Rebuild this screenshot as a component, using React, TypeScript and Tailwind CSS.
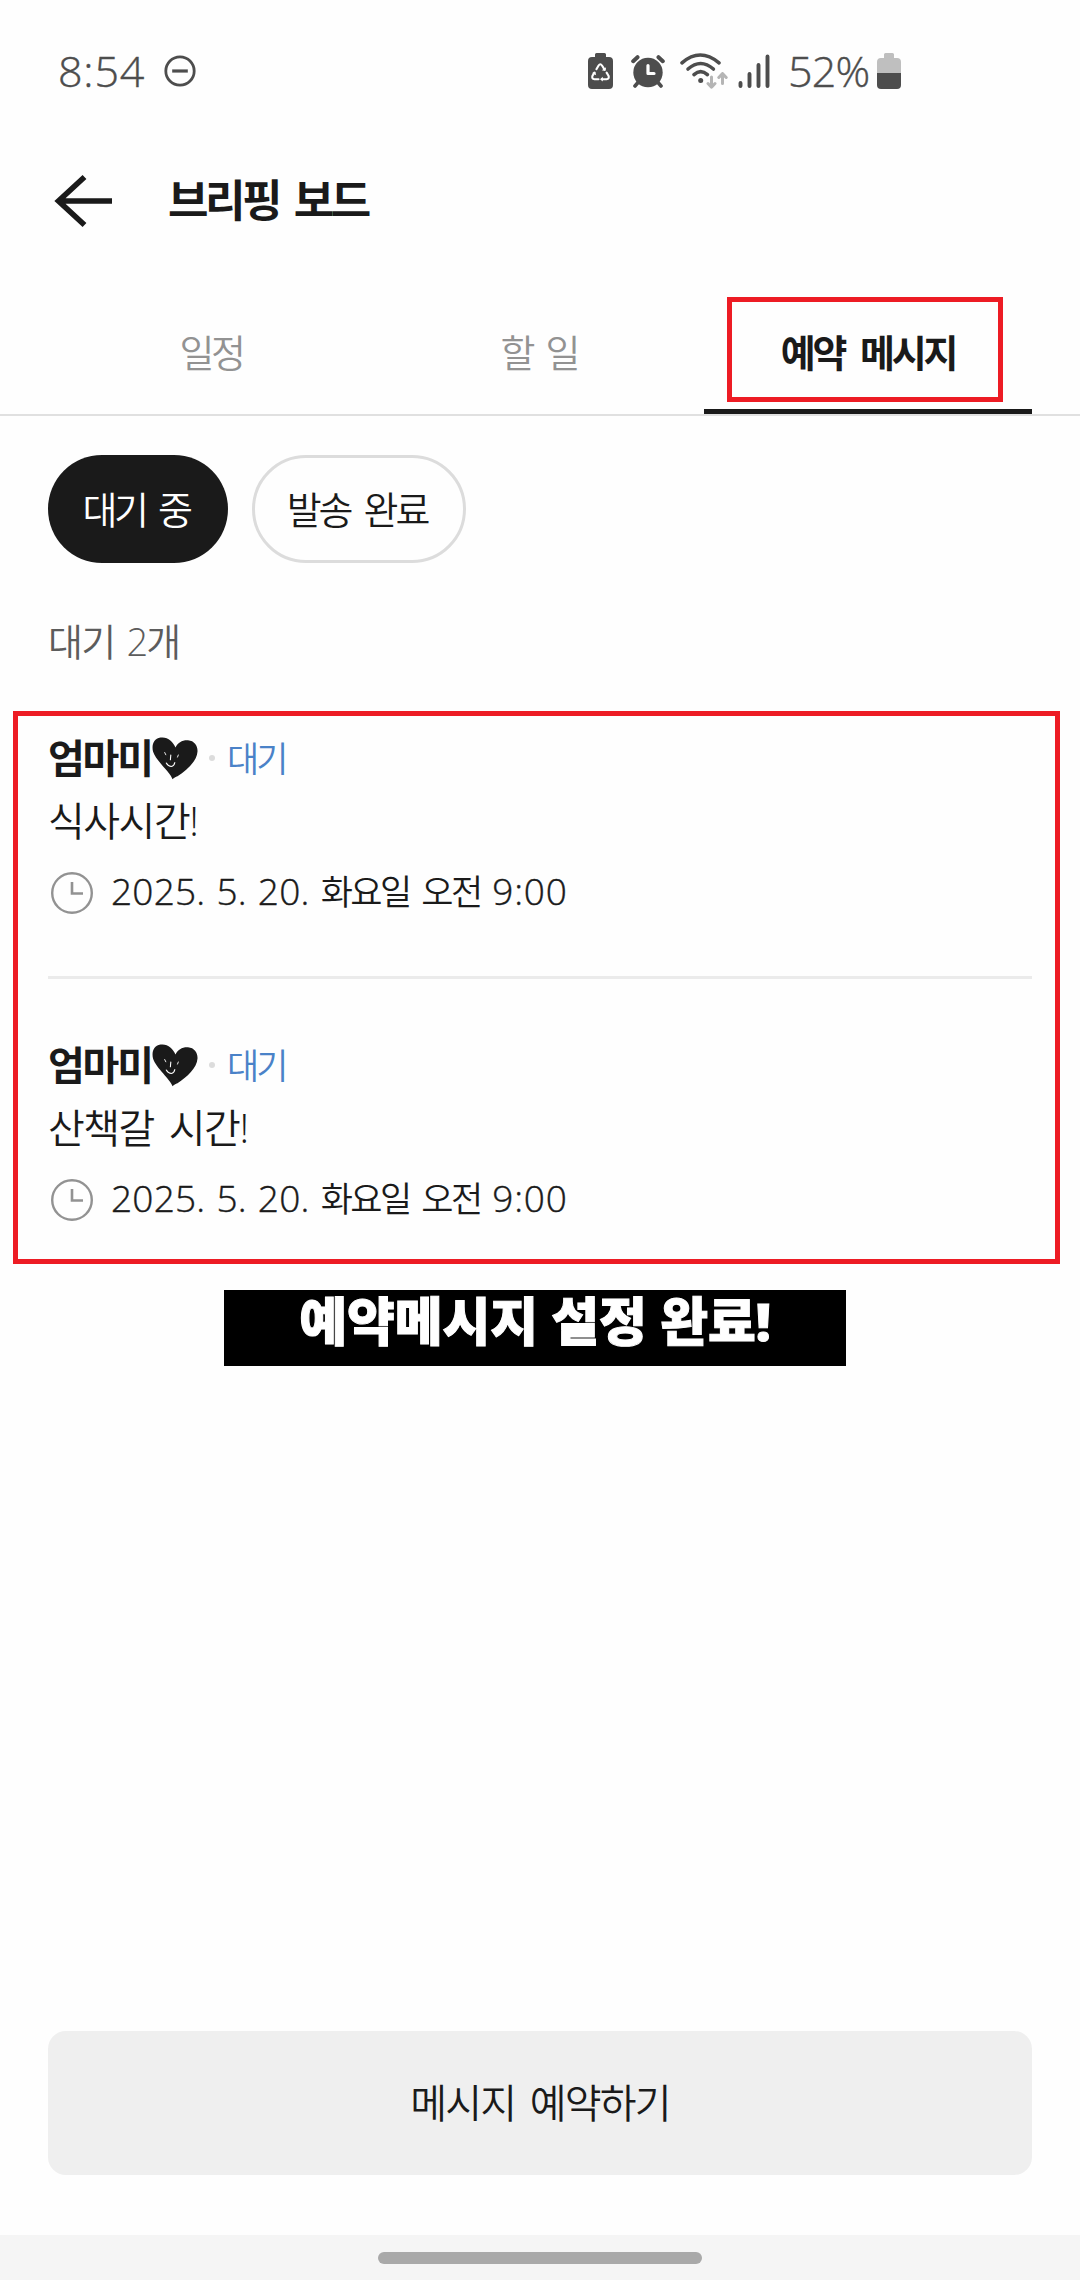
import React from "react";

function Dnd() {
  return (
    <svg className="size-8" viewBox="0 0 32 32" fill="none" stroke="#4d4d4d">
      <circle cx="16" cy="16" r="14.2" strokeWidth="2.8" />
      <path d="M8.2 16h15.6" strokeWidth="3.2" />
    </svg>
  );
}

function RecycleBattery() {
  return (
    <svg className="h-9 w-[25px]" viewBox="0 0 25 36">
      <path d="M7 1.500Q7 0 8.500 0h8Q18 0 18 1.500V4h3q4 0 4 4v24q0 4-4 4H4q-4 0-4-4V8q0-4 4-4h3z" fill="#4d4d4d" />
      <g fill="none" stroke="#fff" strokeWidth="2.100" strokeLinecap="round" strokeLinejoin="round">
        <path d="M8.400 16.200l2.200-3.700q1.700-2.400 3.400 0l2.500 4" />
        <path d="M18.600 19.600l1.900 3.100q1.100 3.200-2 3.500h-4.500" />
        <path d="M10.500 26.200h-4q-3.100-.3-2-3.500l1.900-3.100" />
      </g>
      <path d="M13.800 17.200l3.600.7.700-3.600zM14.800 23.800v4.800l-2.800-2.400zM4 20.100l3.300-1.400.9 3.500z" fill="#fff" />
    </svg>
  );
}

function Alarm() {
  return (
    <svg className="h-[34px] w-[34px]" viewBox="0 0 34 34" fill="none" strokeLinecap="round">
      <circle cx="17" cy="18.500" r="14.700" fill="#4d4d4d" />
      <path d="M2.200 7.200l4.300-4M31.800 7.200l-4.300-4" stroke="#4d4d4d" strokeWidth="4" />
      <path d="M7 28.500l-3 3.500M27 28.500l3 3.500" stroke="#4d4d4d" strokeWidth="3.600" />
      <path d="M17 11.500v8h6" stroke="#fff" strokeWidth="3.200" strokeLinejoin="round" />
    </svg>
  );
}

function Wifi() {
  return (
    <svg className="h-9 w-12" viewBox="0 0 48 36" fill="none" strokeLinecap="round">
      <g stroke="#4d4d4d" strokeWidth="3.600">
        <path d="M2 9.800q18-15.600 37 0" />
        <path d="M8 16q12.600-11 25.400 0" />
        <path d="M14 21.600q6.700-6 13.400 0" />
      </g>
      <circle cx="20.700" cy="27.600" r="2.500" fill="#4d4d4d" />
      <g stroke="#b5b5b5" strokeWidth="3" strokeLinejoin="round">
        <path d="M31.500 24v10M28 30.500l3.500 3.700 3.500-3.700" />
        <path d="M42.500 30.500v-10M38.800 24.500l3.700-3.900 3.700 3.900" />
      </g>
    </svg>
  );
}

function Signal() {
  return (
    <svg className="h-[34px] w-8" viewBox="0 0 32 34" stroke="#4d4d4d" strokeWidth="3.900" strokeLinecap="round">
      <path d="M2.500 29v3M11.500 20v12M20.500 11v21M29.500 2.500V32" />
    </svg>
  );
}

function Battery() {
  return (
    <svg className="h-9 w-6" viewBox="0 0 24 36">
      <path d="M7 1.500Q7 0 8.500 0h7Q17 0 17 1.500V5h3q4 0 4 4v11H0V9q0-4 4-4h3z" fill="#bfbfbf" />
      <path d="M0 20h24v12q0 4-4 4H4q-4 0-4-4z" fill="#4d4d4d" />
    </svg>
  );
}

function Heart() {
  return (
    <svg className="h-[43px] w-[46px]" viewBox="0 0 46 43" fill="none">
      <path
        d="M20.500 42.300C19 36 4 24 1 14.500-.5 8 1.500 2 8.500.6 15.500-.5 21 4.500 23.500 10.500 25.500 5.500 31 2.800 36 3.300c6.500.6 9.800 5.500 9.500 11.200C45 24 35 33 25.500 39.300c-2 .8-3.500 1.700-5 3z"
        fill="#1a1a1a"
      />
      <g stroke="#fefefe" strokeLinecap="round">
        <path d="M12.700 15.500l1.100 2.300M26.300 18l-.8 2.100" strokeWidth="0.900" />
        <path d="M18.800 18l-.4 4.800" strokeWidth="1.100" />
        <path d="M14.300 26q2 3.500 5 3.500 3-.7 3.500-4" strokeWidth="1.100" />
      </g>
    </svg>
  );
}

function Clock() {
  return (
    <svg className="size-[42px]" viewBox="0 0 42 42" fill="none" stroke="#929292">
      <circle cx="21" cy="21" r="19.800" strokeWidth="2.400" />
      <path d="M21 10v11.500h11" strokeWidth="2.600" />
    </svg>
  );
}

function Message({ text }: { text: string }) {
  return (
    <article className="flex flex-col">
      <div className="flex h-[46px] items-center">
        <h2 className="w-[104px] whitespace-nowrap pb-px text-[40px] font-bold tracking-[-2.200px]">엄마미</h2>
        <Heart />
        <span className="ml-[11px] size-1.5 rounded-full bg-[#dcdcdc]" />
        <span className="ml-3 text-[35px] font-[350] tracking-[-3px] text-[#4a82c8]">대기</span>
      </div>
      <p className="mt-[17px] flex h-[46px] items-center whitespace-pre text-[40px] font-[350] tracking-[-1.500px] [word-spacing:6px]">{text}</p>
      <div className="mt-[26px] flex h-[46px] items-center pl-[3px]">
        <Clock />
        <time className="ml-[18px] flex whitespace-pre pb-[5px] text-[35px] font-[350]">
          <span className="text-[37px] tracking-[0.200px] [word-spacing:1.300px] [-webkit-text-stroke:0.400px_#1a1a1a]">{"2025. 5. 20. "}</span>
          <span className="pt-0.5 tracking-[-2.500px] [word-spacing:5px]">{"화요일 오전 "}</span>
          <span className="text-[37px] tracking-[0.800px] [-webkit-text-stroke:0.400px_#1a1a1a]">9:00</span>
        </time>
      </div>
      <div className="h-0.5" />
    </article>
  );
}

export default function App() {
  return (
    <div className="relative flex h-[2280px] w-[1080px] flex-col overflow-hidden bg-[#fefefe] font-['Open_Sans','Noto_Sans_CJK_KR',sans-serif] leading-none text-[#1a1a1a]">
      <header className="flex h-[142px] items-center pl-[58px] text-[#4d4d4d]">
        <span className="w-[106px] pb-0.5 text-[43px] font-light tracking-[0.800px] [-webkit-text-stroke:0.400px_#4d4d4d]">8:54</span>
        <Dnd />
        <div className="ml-[392px] flex items-center">
          <RecycleBattery />
          <span className="ml-[18px]"><Alarm /></span>
          <span className="ml-[15px]"><Wifi /></span>
          <span className="ml-[10px]"><Signal /></span>
          <span className="ml-[18px] w-[88px] whitespace-nowrap pb-0.5 text-[43px] font-light tracking-[-0.800px] [-webkit-text-stroke:0.400px_#4d4d4d]">52%</span>
          <span className="ml-px"><Battery /></span>
        </div>
      </header>

      <div className="flex h-[118px] items-center pl-[54px]">
        <svg className="h-[54px] w-[60px]" viewBox="0 0 60 54" fill="none" stroke="#1a1a1a" strokeWidth="5.600">
          <path d="M4 27h54M30.500 3L4.500 27l26 24" />
        </svg>
        <h1 className="ml-[54px] pb-[3px] text-[44px] font-bold tracking-[-3.500px] [word-spacing:7px]">브리핑 보드</h1>
      </div>

      <nav className="grid h-[156px] grid-cols-3 border-b-2 border-[#e0e0e0] px-12 text-[38px]">
        <button className="pr-0.5 pt-[29px] font-[350] tracking-[-3.500px] text-[#929292]">일정</button>
        <button className="pr-0.5 pt-[29px] font-[350] tracking-[-3px] text-[#929292] [word-spacing:6px]">할 일</button>
        <button className="border-b-[5px] border-[#1a1a1a] pt-[34px] font-bold tracking-[-3.200px] [word-spacing:9px]">예약 메시지</button>
      </nav>

      <div className="mt-[39px] flex gap-6 px-12">
        <button className="h-[108px] w-[180px] rounded-full bg-[#1a1a1a] pb-px pr-1 text-[38px] font-[350] tracking-[-3.500px] text-white [word-spacing:6px]">대기 중</button>
        <button className="h-[108px] w-[214px] rounded-full border-3 border-[#dcdcdc] pb-px pr-1 text-[38px] font-[350] tracking-[-3px] [word-spacing:6px]">발송 완료</button>
      </div>

      <p className="mt-[56px] flex h-11 items-center whitespace-pre pb-px pl-12 text-[38px] font-[350] tracking-[-1.800px] text-[#5c5c5c] [word-spacing:4px]">대기 2개</p>

      <main className="mt-[72px] px-12">
        <Message text="식사시간!" />
        <hr className="mt-[58px] mb-[63px] border-0 border-t-[3px] border-[#ebebeb]" />
        <Message text="산책갈 시간!" />
      </main>

      <div className="mt-[65px] ml-[224px] flex h-[76px] w-[622px] justify-center whitespace-pre bg-black pt-[5px] text-[52px] font-black tracking-[-0.100px] text-white [-webkit-text-stroke:1px_white]">
        예약메시지 설정 완료!
      </div>

      <footer className="mt-auto">
        <div className="px-12">
          <button className="h-36 w-full rounded-[18px] bg-[#efefef] pb-px text-[40px] font-[350] tracking-[-1.800px] [word-spacing:6px]">메시지 예약하기</button>
        </div>
        <div className="mt-[60px] flex h-[45px] justify-center bg-[#f5f5f5] pt-[17px]">
          <span className="h-3 w-[324px] rounded-full bg-[#a9a9a9]" />
        </div>
      </footer>

      <div className="absolute left-[727px] top-[297px] h-[105px] w-[276px] border-[5px] border-[#ed1c24]" />
      <div className="absolute left-[13px] top-[711px] h-[553px] w-[1047px] border-[5px] border-[#ed1c24]" />
    </div>
  );
}
